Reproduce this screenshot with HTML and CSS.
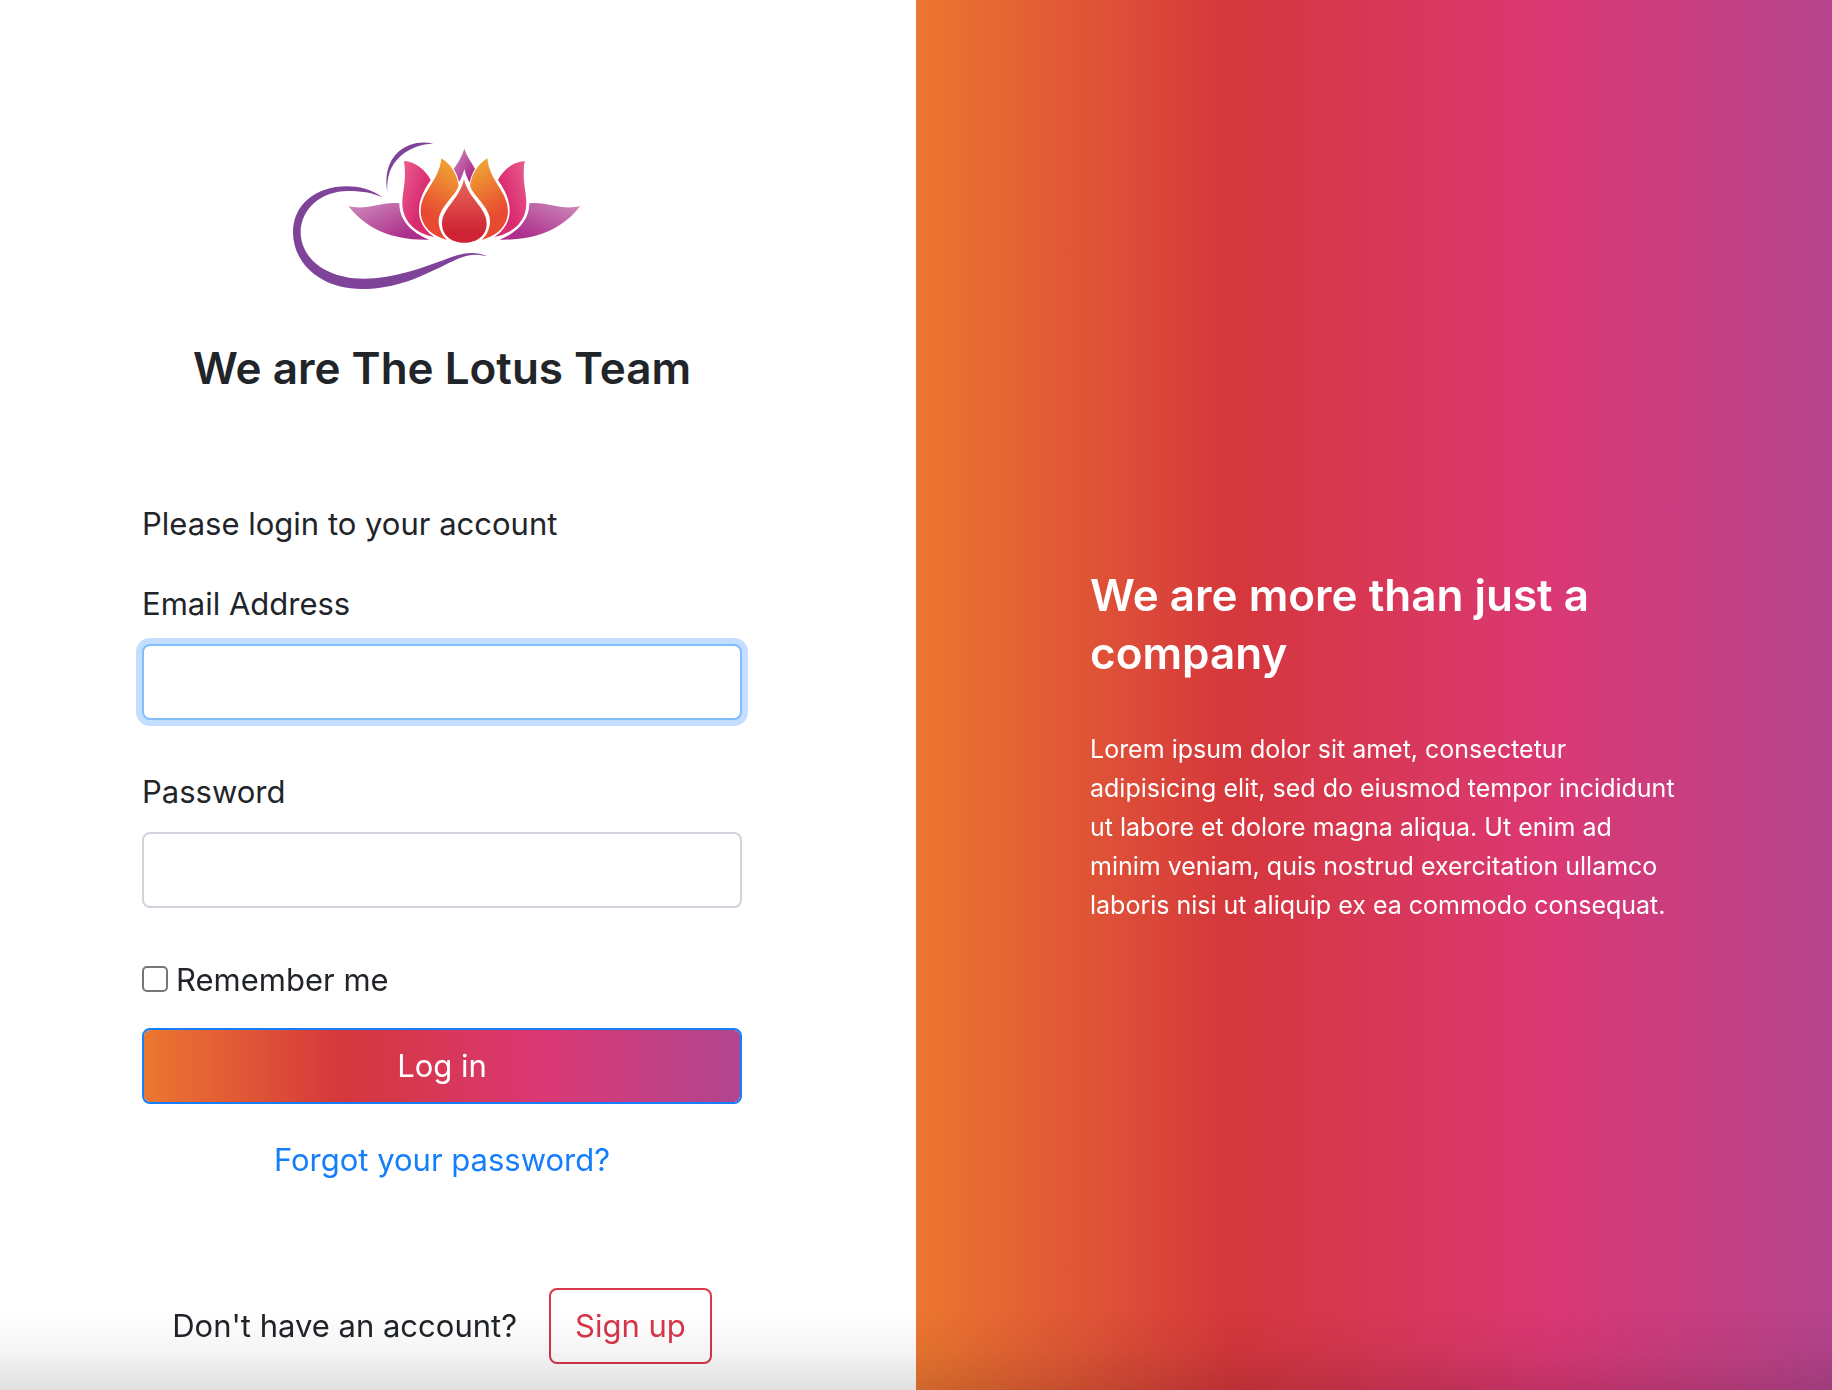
FILE: index.html
```html
<!DOCTYPE html>
<html lang="en">
<head>
<meta charset="utf-8">
<meta name="viewport" content="width=device-width, initial-scale=1">
<title>The Lotus Team</title>
<link rel="stylesheet" href="styles.css">
</head>
<body>
<main class="page">
  <section class="login">
    <svg class="logo" viewBox="0 0 972 510" role="img" aria-label="Lotus">
      <defs>
        <linearGradient id="leaf" x1="0" y1="0" x2="1" y2="1">
          <stop offset="0" stop-color="#cf8dbd"/><stop offset=".8" stop-color="#ad2f8c"/>
        </linearGradient>
        <linearGradient id="pink" x1="0" y1="0" x2=".7" y2=".6">
          <stop offset="0" stop-color="#e9608f"/><stop offset=".9" stop-color="#da2a70"/>
        </linearGradient>
        <linearGradient id="orange" x1=".7" y1="0" x2=".4" y2="1">
          <stop offset="0" stop-color="#f0a832"/><stop offset=".75" stop-color="#e84a31"/>
        </linearGradient>
        <linearGradient id="red" x1="0" y1="0" x2="0" y2="1">
          <stop offset="0" stop-color="#e8675a"/><stop offset=".85" stop-color="#cf2333"/>
        </linearGradient>
        <g id="side">
          <path fill="url(#leaf)" d="M205 228C262 243 305 213 358 220C358 272 395 308 447 329C340 332 258 297 205 228Z"/>
          <path fill="url(#pink)" d="M372 93C406 95 437 120 452 150C424 190 412 225 419 262C425 287 442 308 463 321C405 310 364 272 367 212C369 175 380 150 372 93Z"/>
          <path fill="url(#orange)" d="M484 85C512 102 530 130 536 166C531 184 519 196 508 209C487 235 474 255 476 280C479 302 488 319 501 329C456 318 422 288 422 242C424 182 477 155 484 85Z"/>
        </g>
      </defs>
      <path fill="#80439a" d="M308 203C275 177 237 169 200 169C105 169 39 226 39 307C39 402 125 477 245 477C350 477 428 437 490 407C546 379 572 366 622 379C590 364 555 367 515 381C430 412 345 446 250 446C135 446 62 382 62 307C62 240 120 183 205 183C250 183 280 189 308 203Z"/>
      <path fill="#80439a" d="M322 186C314 138 322 95 357 64C386 39 425 32 460 41C425 42 392 52 363 77C330 106 320 140 322 186Z"/>
      <path fill="url(#leaf)" d="M553 56C560 79 576 98 585 117C577 130 572 145 569 158C562 145 556 132 553 117C549 132 544 146 537 156C533 139 529 129 521 117C533 99 546 80 553 56Z"/>
      <use href="#side"/>
      <use href="#side" transform="matrix(-1 0 0 1 1106 0)"/>
      <path fill="url(#red)" d="M552 148C560 181 578 201 596 225C611 244 620 261 620 281C620 315 592 338 553 338C514 338 486 315 486 281C486 261 495 244 510 225C528 201 544 181 552 148Z"/>
    </svg>
    <h1 class="title brand">We are The Lotus Team</h1>
    <form class="form">
      <p class="intro">Please login to your account</p>
      <div class="field">
        <label for="email">Email Address</label>
        <input class="control" type="email" id="email" autofocus>
      </div>
      <div class="field">
        <label for="password">Password</label>
        <input class="control" type="password" id="password">
      </div>
      <div class="remember">
        <input type="checkbox" id="remember">
        <label for="remember">Remember me</label>
      </div>
      <button class="btn btn-login" type="submit">Log in</button>
      <a class="forgot" href="#">Forgot your password?</a>
      <div class="signup">
        <span>Don't have an account?</span>
        <button class="btn btn-signup" type="button">Sign up</button>
      </div>
    </form>
  </section>
  <section class="about">
    <h2 class="title">We are more than just a company</h2>
    <p class="copy">Lorem ipsum dolor sit amet, consectetur adipisicing elit, sed do eiusmod tempor incididunt ut labore et dolore magna aliqua. Ut enim ad minim veniam, quis nostrud exercitation ullamco laboris nisi ut aliquip ex ea commodo consequat.</p>
  </section>
</main>
</body>
</html>
```
FILE: styles.css
```css
:root {
  --brand: linear-gradient(to right, #ec7730, #d5373c, #db3874, #b14690);
}

* {
  box-sizing: border-box;
}

body {
  margin: 0;
  background: #fff;
  color: #212529;
  font: 400 31px/48px Inter, "Liberation Sans", sans-serif;
}

.page {
  display: grid;
  grid-template-columns: 1fr 1fr;
  min-height: 100vh;
}

/* soft shade along the bottom edge of the window */
.page::after {
  content: "";
  position: fixed;
  inset: auto 0 0;
  height: 80px;
  background: linear-gradient(to bottom, rgba(0, 0, 0, 0), rgba(0, 0, 0, 0.04) 50%, rgba(0, 0, 0, 0.12));
  pointer-events: none;
}

.login {
  display: flex;
  flex-direction: column;
  align-items: center;
  padding: 130px 174px 26px 142px;
}

.logo {
  width: 324px;
  height: 170px;
}

.title {
  margin: 0;
  font-size: 44px;
  line-height: 58px;
  font-weight: 600;
}

.brand {
  margin: 39px 0 103px;
  text-align: center;
}

.form {
  display: flex;
  flex-direction: column;
  width: 100%;
}

.intro {
  margin: 0 0 32px;
}

.field {
  display: flex;
  flex-direction: column;
  gap: 16px;
  margin-bottom: 48px;
}

.control {
  width: 100%;
  height: 76px;
  padding: 12px 24px;
  border: 2px solid #ced4da;
  border-radius: 8px;
  background: #fff;
  color: #495057;
  font: inherit;
  caret-color: transparent;
}

.control:focus {
  border-color: #80bdff;
  outline: 0;
  box-shadow: 0 0 0 6px #c3deff;
}

.remember {
  display: flex;
  align-items: center;
  gap: 8px;
  margin-bottom: 24px;
}

.remember input {
  appearance: none;
  width: 26px;
  height: 26px;
  margin: 0 0 2px;
  border: 2px solid #767676;
  border-radius: 5px;
  background: #fff;
}

.remember input:checked {
  background: #0075ff;
}

.btn {
  height: 76px;
  padding: 12px 24px;
  border: 2px solid;
  border-radius: 8px;
  font: inherit;
  cursor: pointer;
}

.btn-login {
  border-color: #147efb;
  background: var(--brand) padding-box;
  color: #fff;
}

.forgot {
  align-self: center;
  margin: 32px 0 104px;
  color: #147efb;
  text-decoration: none;
}

.signup {
  display: flex;
  align-items: center;
  justify-content: center;
  gap: 32px;
}

.btn-signup {
  border-color: #d93649;
  background: transparent;
  color: #d93649;
}

.about {
  display: flex;
  flex-direction: column;
  justify-content: center;
  gap: 48px;
  padding: 100px 142px 0 174px;
  background: var(--brand) 0 0 / calc(100% + 32px) 100%;
  color: #fff;
}

.copy {
  max-width: 592px;
  margin: 0;
  font-size: 25px;
  line-height: 39px;
}
```
